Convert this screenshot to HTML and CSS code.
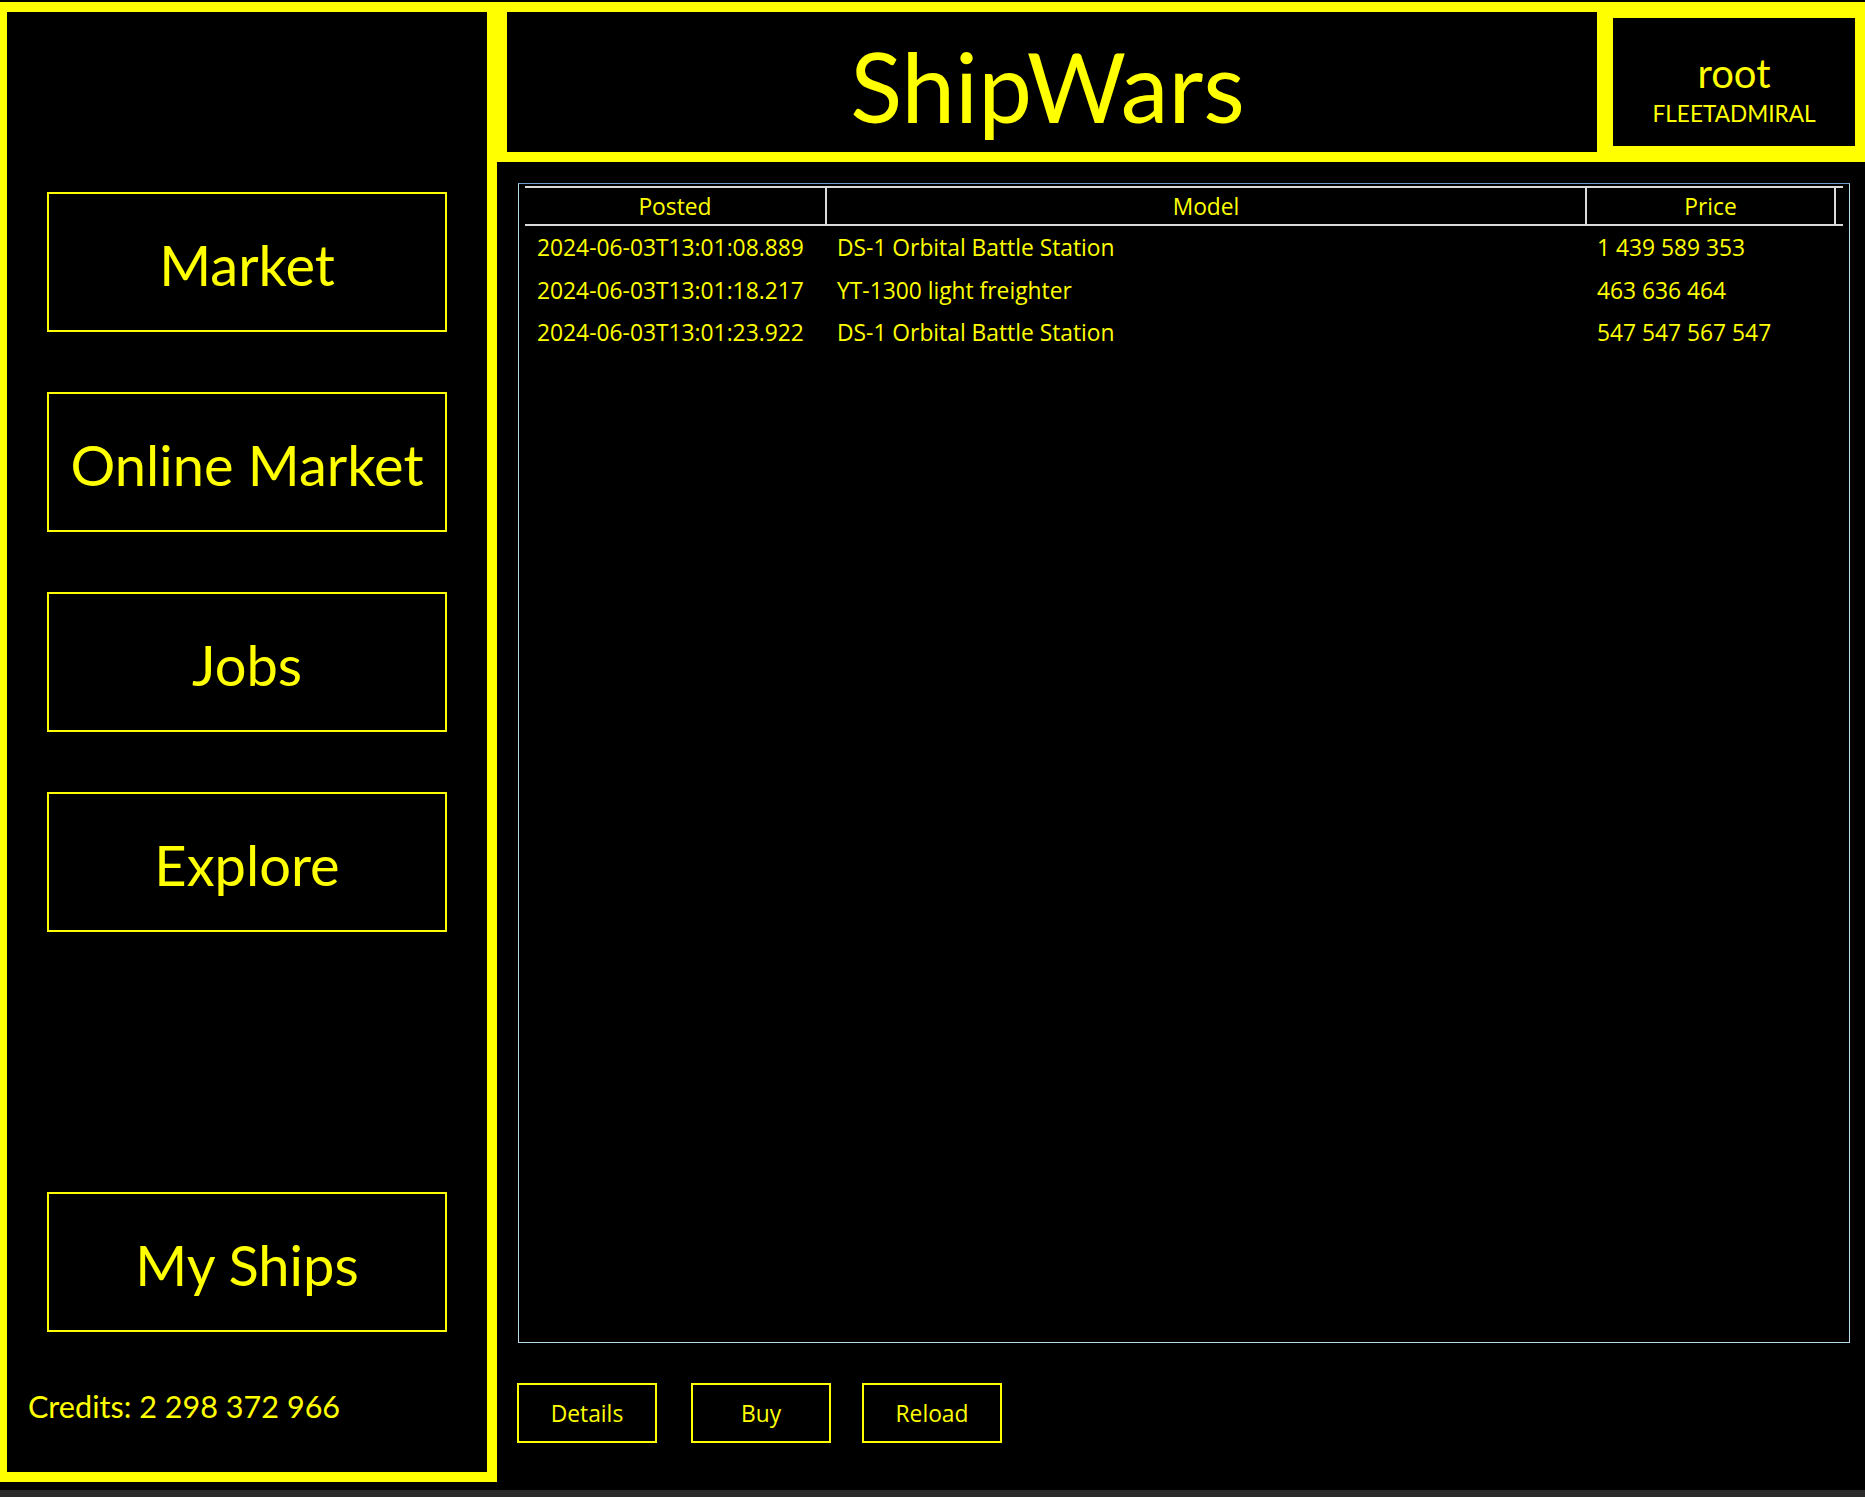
FILE: index.html
```html
<!DOCTYPE html>
<html lang="en">
<head>
<meta charset="utf-8">
<title>ShipWars</title>
<link rel="stylesheet" href="styles.css">
</head>
<body>
<div class="app">
  <aside class="sidebar">
    <nav class="nav">
      <div class="nav-btn">Market</div>
      <div class="nav-btn">Online Market</div>
      <div class="nav-btn">Jobs</div>
      <div class="nav-btn">Explore</div>
      <div class="nav-slot"></div>
      <div class="nav-btn">My Ships</div>
    </nav>
    <div class="credits">Credits: 2 298 372 966</div>
  </aside>
  <div class="content">
    <header class="topbar">
      <div class="title">ShipWars</div>
      <div class="user">
        <div class="user-name">root</div>
        <div class="user-rank">FLEETADMIRAL</div>
      </div>
    </header>
    <main class="main">
      <div class="table">
        <div class="thead">
          <div class="th">Posted</div>
          <div class="th">Model</div>
          <div class="th">Price</div>
          <div class="th th-fill"></div>
        </div>
        <div class="tbody">
          <div class="row">
            <div class="td td-first">2024-06-03T13:01:08.889</div>
            <div class="td">DS-1 Orbital Battle Station</div>
            <div class="td">1 439 589 353</div>
          </div>
          <div class="row">
            <div class="td td-first">2024-06-03T13:01:18.217</div>
            <div class="td">YT-1300 light freighter</div>
            <div class="td">463 636 464</div>
          </div>
          <div class="row">
            <div class="td td-first">2024-06-03T13:01:23.922</div>
            <div class="td">DS-1 Orbital Battle Station</div>
            <div class="td">547 547 567 547</div>
          </div>
        </div>
      </div>
      <div class="actions">
        <div class="btn">Details</div>
        <div class="btn btn-buy">Buy</div>
        <div class="btn btn-reload">Reload</div>
      </div>
    </main>
  </div>
</div>
<div class="taskbar"></div>
</body>
</html>
```
FILE: styles.css
```css
html, body {
  margin: 0;
  padding: 0;
  background: #000;
  overflow: hidden;
}
body {
  width: 1865px;
  height: 1497px;
  font-family: Lato, "Noto Sans", sans-serif;
  color: #ffff00;
}
.app {
  display: flex;
  height: 1488px;
  margin-top: 2px;
}
.sidebar {
  box-sizing: border-box;
  width: 497px;
  height: 1480px;
  flex-shrink: 0;
  border: 10px solid #ffff00;
  border-left-width: 7px;
  background: #000;
  display: flex;
  flex-direction: column;
}
.nav {
  display: flex;
  flex-direction: column;
  gap: 60px;
  padding: 180px 40px 0;
}
.nav-btn {
  box-sizing: border-box;
  height: 140px;
  border: 2px solid #ffff00;
  display: flex;
  align-items: center;
  justify-content: center;
  font-size: 56px;
  padding-top: 4px;
}
.nav-slot {
  height: 140px;
}
.credits {
  font-size: 30.6px;
  line-height: 40px;
  margin-top: 55px;
  padding-left: 21px;
}
.content {
  flex: 1;
  display: flex;
  flex-direction: column;
}
.topbar {
  display: flex;
  height: 160px;
  flex-shrink: 0;
  background: #ffff00;
}
.title {
  box-sizing: border-box;
  width: 1090px;
  margin: 10px 0 10px 10px;
  background: #000;
  display: flex;
  align-items: center;
  justify-content: center;
  font-size: 96px;
  padding-top: 6px;
  padding-right: 9px;
}
.user {
  box-sizing: border-box;
  flex: 1;
  margin: 16px 10px 16px 16px;
  background: #000;
  display: flex;
  flex-direction: column;
  align-items: center;
  padding-top: 35px;
}
.user-name {
  font-size: 40px;
  line-height: 40px;
}
.user-rank {
  font-size: 22.6px;
  line-height: 26px;
  margin-top: 8px;
}
.main {
  flex: 1;
  background: #000;
  padding: 21px 15px 0 21px;
}
.table {
  box-sizing: border-box;
  height: 1160px;
  border: 1px solid #b8d8ec;
  border-top-color: #6b9dc8;
  padding: 2px 6px;
  font-family: "Open Sans", "Noto Sans", sans-serif;
}
.thead, .row {
  display: grid;
  grid-template-columns: 302px 760px 249px 1fr;
}
.thead {
  box-sizing: border-box;
  height: 40px;
  border-top: 2px solid #dadada;
  border-bottom: 2px solid #dadada;
}
.th {
  border-right: 2px solid #dadada;
  text-align: center;
  font-size: 22.8px;
  line-height: 35px;
  padding-top: 1px;
}
.th-fill {
  border-right: none;
}
.tbody {
  padding-top: 1px;
}
.td {
  font-size: 22.8px;
  line-height: 42.6px;
  padding-left: 10px;
  white-space: nowrap;
}
.td-first {
  padding-left: 12px;
}
.actions {
  display: flex;
  margin-top: 40px;
  margin-left: -1px;
}
.btn {
  box-sizing: border-box;
  width: 140px;
  height: 60px;
  border: 2px solid #ffff00;
  display: flex;
  align-items: center;
  justify-content: center;
  font-family: "Open Sans", "Noto Sans", sans-serif;
  font-size: 22.8px;
  padding-top: 1px;
}
.btn-buy {
  margin-left: 34px;
}
.btn-reload {
  margin-left: 31px;
}
.taskbar {
  height: 7px;
  background: #2b2b2b;
}
```
